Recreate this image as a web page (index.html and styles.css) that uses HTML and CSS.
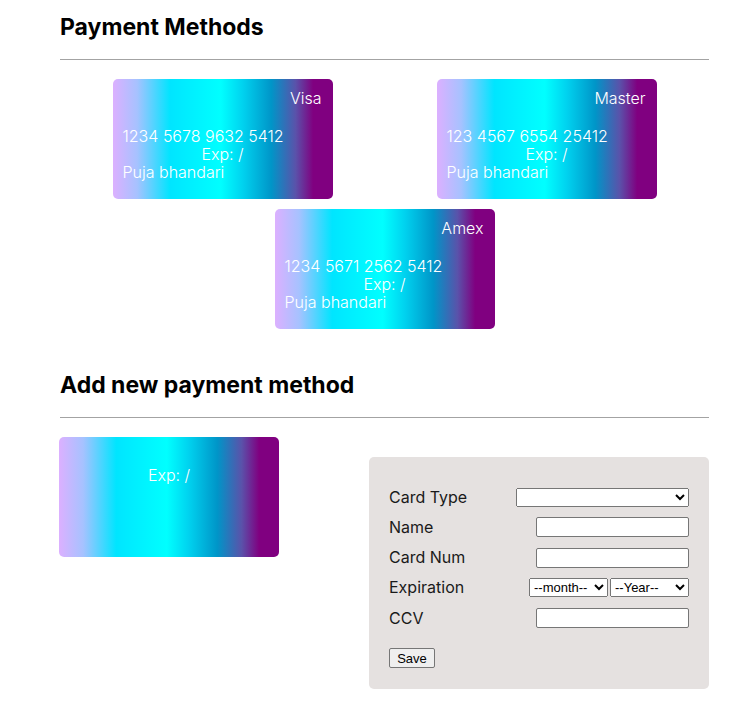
FILE: index.html
```html
<!DOCTYPE html>
<html>

<head>
    <link rel="stylesheet" href="styles.css">
</head>

<body>
    <section id="mainbox">
        <h2 class="title">Payment Methods</h2>
        <hr class="rule">
        <section class="cardlist">
            <div class="card">
                <div class="brand">Visa</div>
                <div class="number">1234 5678 9632 5412</div>
                <div class="exp">Exp: /</div>
                <div class="holder">Puja bhandari</div>
            </div>
            <div class="card">
                <div class="brand">Master</div>
                <div class="number">123 4567 6554 25412</div>
                <div class="exp">Exp: /</div>
                <div class="holder">Puja bhandari</div>
            </div>
            <div class="card">
                <div class="brand">Amex</div>
                <div class="number">1234 5671 2562 5412</div>
                <div class="exp">Exp: /</div>
                <div class="holder">Puja bhandari</div>
            </div>
        </section>

        <h2 class="title second">Add new payment method</h2>
        <hr class="rule">
        <section class="newbox">
            <div class="card preview">
                <div class="exp">Exp: /</div>
            </div>
            <form class="cardform">
                <label>Card Type</label>
                <select class="typesel">
                    <option></option>
                    <option>Visa</option>
                    <option>Master</option>
                    <option>Amex</option>
                </select>
                <label>Name</label>
                <input type="text" class="field">
                <label>Card Num</label>
                <input type="text" class="field">
                <label>Expiration</label>
                <div class="expsel">
                    <select class="datesel">
                        <option>--month--</option>
                    </select>
                    <select class="datesel">
                        <option>--Year--</option>
                    </select>
                </div>
                <label>CCV</label>
                <input type="text" class="field">
                <div class="actions">
                    <button type="button" class="savebtn">Save</button>
                </div>
            </form>
        </section>
    </section>
</body>
</html>
```

FILE: styles.css
```css
body {
    margin: 0;
    font-family: Inter, "Noto Sans", sans-serif;
    background: #fff;
}

#mainbox {
    padding: 13px 33px 0 60px;
}

.title {
    font-size: 23px;
    line-height: 28px;
    font-weight: 700;
    color: #000;
    margin: 0 0 18px 0;
}

.title.second {
    margin-top: 32px;
}

.rule {
    border: none;
    border-top: 1px solid #a3a3a3;
    margin: 0;
}

.cardlist {
    display: flex;
    flex-wrap: wrap;
    justify-content: center;
    padding-top: 19px;
}

.card {
    box-sizing: border-box;
    width: 220px;
    height: 120px;
    margin: 0 52px 10px 52px;
    padding: 10px 10px 0 10px;
    border-radius: 5px;
    color: #fff;
    font-size: 16px;
    line-height: 18px;
    font-weight: 300;
    background: linear-gradient(to right, #dcb0ff 0%, #a6c2ff 11%, #00e5ff 26%, #00ffff 49%, #00d2ef 59%, #0095c8 72%, #5a52aa 83%, #800080 91%, #800080 100%);
}

.brand {
    text-align: right;
    padding-right: 1px;
    height: 38px;
}

.exp {
    text-align: center;
}

.newbox {
    display: flex;
    justify-content: space-between;
    align-items: flex-start;
    padding-top: 19px;
}

.preview {
    margin: 0 0 0 -1px;
    padding-top: 29px;
}

.cardform {
    box-sizing: border-box;
    width: 340px;
    margin-top: 20px;
    padding: 30px 20px 21px 20px;
    background: #e5e1e0;
    border-radius: 5px;
    display: grid;
    grid-template-columns: auto 1fr;
    grid-template-rows: repeat(5, 20px) auto;
    row-gap: 10.3px;
    align-items: center;
}

.cardform label {
    font-size: 16px;
    color: #1a1a1a;
    line-height: 19px;
}

.cardform select,
.cardform input {
    justify-self: end;
}

.cardform select,
.cardform input,
.cardform button {
    font-family: "Liberation Sans", Arial, sans-serif;
    font-size: 13px;
    box-sizing: border-box;
}

.typesel {
    width: 173px;
    height: 19px;
}

.field {
    width: 153px;
    height: 20px;
    border: 1px solid #767676;
    border-radius: 2px;
    background: #fff;
    padding: 1px 2px;
}

.expsel {
    justify-self: end;
    display: flex;
    gap: 2px;
}

.datesel {
    width: 79px;
    height: 19px;
}

.actions {
    grid-column: 1 / 3;
    padding-top: 10px;
    display: flex;
}

.savebtn {
    width: 46px;
    height: 20px;
    padding: 0;
    background: #efefef;
    border: 1px solid #767676;
    border-radius: 2px;
    color: #000;
}
```
